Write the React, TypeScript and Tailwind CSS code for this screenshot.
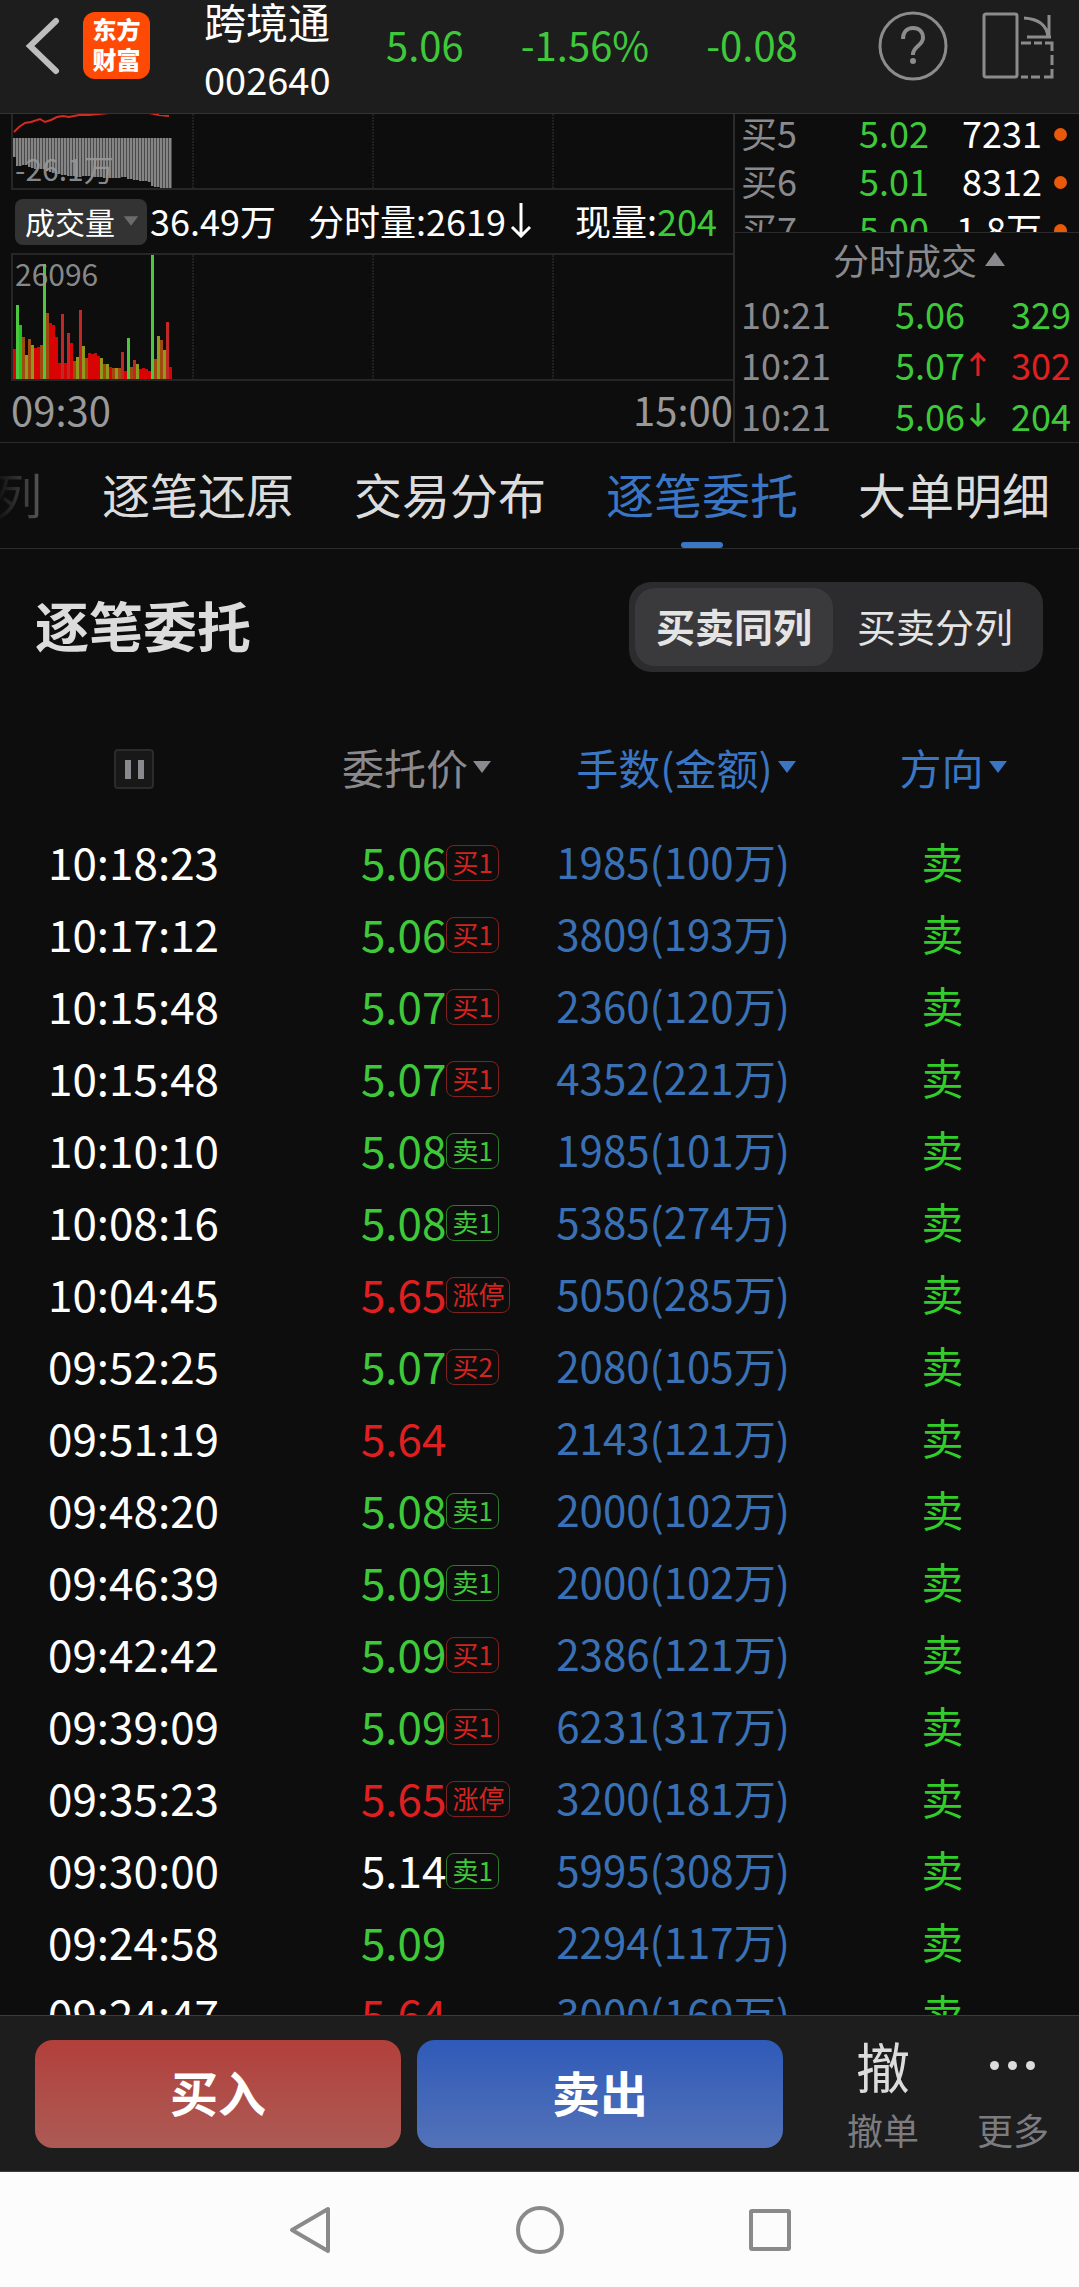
import React from 'react';
import clsx from 'clsx';

type Tone = 'up' | 'down' | 'flat';

interface Order {
  time: string;
  price: string;
  tone: Tone;
  tag?: string;
  amount: string;
}

const toneText: Record<Tone, string> = {
  up: 'text-[#e02020]',
  down: 'text-[#3fc93a]',
  flat: 'text-white',
};

const orders: Order[] = [
  { time: '10:18:23', price: '5.06', tone: 'down', tag: '买1', amount: '1985(100万)' },
  { time: '10:17:12', price: '5.06', tone: 'down', tag: '买1', amount: '3809(193万)' },
  { time: '10:15:48', price: '5.07', tone: 'down', tag: '买1', amount: '2360(120万)' },
  { time: '10:15:48', price: '5.07', tone: 'down', tag: '买1', amount: '4352(221万)' },
  { time: '10:10:10', price: '5.08', tone: 'down', tag: '卖1', amount: '1985(101万)' },
  { time: '10:08:16', price: '5.08', tone: 'down', tag: '卖1', amount: '5385(274万)' },
  { time: '10:04:45', price: '5.65', tone: 'up', tag: '涨停', amount: '5050(285万)' },
  { time: '09:52:25', price: '5.07', tone: 'down', tag: '买2', amount: '2080(105万)' },
  { time: '09:51:19', price: '5.64', tone: 'up', amount: '2143(121万)' },
  { time: '09:48:20', price: '5.08', tone: 'down', tag: '卖1', amount: '2000(102万)' },
  { time: '09:46:39', price: '5.09', tone: 'down', tag: '卖1', amount: '2000(102万)' },
  { time: '09:42:42', price: '5.09', tone: 'down', tag: '买1', amount: '2386(121万)' },
  { time: '09:39:09', price: '5.09', tone: 'down', tag: '买1', amount: '6231(317万)' },
  { time: '09:35:23', price: '5.65', tone: 'up', tag: '涨停', amount: '3200(181万)' },
  { time: '09:30:00', price: '5.14', tone: 'flat', tag: '卖1', amount: '5995(308万)' },
  { time: '09:24:58', price: '5.09', tone: 'down', amount: '2294(117万)' },
  { time: '09:24:47', price: '5.64', tone: 'up', amount: '3000(169万)' },
];

const bids = [
  { level: '买5', price: '5.02', qty: '7231' },
  { level: '买6', price: '5.01', qty: '8312' },
  { level: '买7', price: '5.00', qty: '1.8万' },
];

const trades: { time: string; price: string; arrow?: 'up' | 'down'; qty: string; tone: Tone }[] = [
  { time: '10:21', price: '5.06', qty: '329', tone: 'down' },
  { time: '10:21', price: '5.07', arrow: 'up', qty: '302', tone: 'up' },
  { time: '10:21', price: '5.06', arrow: 'down', qty: '204', tone: 'down' },
];

// one bar per minute: colour key + height
const barColors: Record<string, string> = {
  r: '#d80404',
  t: '#c02828',
  b: '#a04a10',
  g: '#1fc41f',
  l: '#4cc840',
  o: '#8f9a1c',
};
const volumes: [string, number][] = [
  ['r', 30], ['l', 74], ['g', 54], ['b', 42], ['o', 24], ['b', 40], ['o', 34], ['r', 31],
  ['r', 32], ['b', 34], ['l', 115], ['b', 66], ['r', 56], ['r', 54], ['r', 42], ['r', 16],
  ['t', 65], ['r', 16], ['t', 46], ['r', 36], ['b', 18], ['o', 22], ['t', 69], ['o', 33],
  ['b', 21], ['r', 26], ['r', 25], ['r', 26], ['r', 23], ['o', 21], ['b', 15], ['o', 15],
  ['r', 12], ['b', 11], ['o', 11], ['b', 11], ['t', 27], ['r', 8], ['l', 41], ['b', 12],
  ['t', 19], ['o', 15], ['r', 10], ['r', 11], ['r', 10], ['r', 8], ['l', 126], ['b', 20],
  ['o', 43], ['b', 39], ['o', 29], ['t', 57], ['r', 12],
];
const flows = [
  19, 28, 28, 27, 27, 29, 30, 31, 31, 31, 31, 33, 34, 35, 36, 36, 37, 37,
  38, 38, 38, 39, 39, 38, 38, 38, 39, 39, 39, 39, 40, 40, 40, 40, 40, 40,
  39, 39, 41, 41, 42, 42, 43, 43, 43, 44, 48, 49, 49, 50, 51, 52, 52,
];

const Caret: React.FC<{ className?: string; up?: boolean }> = ({ className, up }) => (
  <svg width="20" height="14" viewBox="0 0 20 14" className={className} aria-hidden="true">
    <path d={up ? 'M10 0 20 14H0Z' : 'M1 1H19L10 13Z'} fill="currentColor" />
  </svg>
);

const GridLines: React.FC = () => (
  <>
    {['25%', '50%', '75%'].map(x => (
      <line key={x} x1={x} x2={x} y1="0" y2="100%" stroke="#202020" strokeWidth="2" strokeDasharray="2 1" />
    ))}
  </>
);

const Header: React.FC = () => (
  <header className="flex h-[114px] shrink-0 items-start border-b border-[#333] bg-[#1d1d1d] pl-6 pr-6">
    <button aria-label="返回" className="mt-4">
      <svg width="36" height="60" viewBox="0 0 36 60" fill="none">
        <path d="M32 5 6 30 32 55" stroke="#bdbdbd" strokeWidth="6" strokeLinecap="round" />
      </svg>
    </button>
    <div className="ml-[23px] mt-3 flex h-[67px] w-[67px] flex-col items-center justify-center rounded-xl bg-[#ff4a05] pb-1 text-2xl font-black leading-[30px] text-white">
      <span>东方</span>
      <span>财富</span>
    </div>
    <div className="ml-[54px] flex w-32 flex-col text-white">
      <h1 className="text-[42px] leading-[42px]">跨境通</h1>
      <span className="text-[38px] leading-[74px]">002640</span>
    </div>
    <div className="ml-[54px] flex gap-[57px] text-[40px] leading-[88px] text-[#3fc93a]">
      <span>5.06</span>
      <span>-1.56%</span>
      <span>-0.08</span>
    </div>
    <div className="ml-auto mt-[10px] flex gap-8">
      <button aria-label="帮助">
        <svg width="72" height="72" viewBox="0 0 72 72" fill="none" stroke="#8c8c8c" strokeWidth="3">
          <circle cx="36" cy="36" r="33" />
          <path d="M26 29c0-7 4-11 10-11s10 4 10 10c0 7-10 9-10 16v1" strokeWidth="4" />
          <circle cx="36" cy="51" r="3" fill="#8c8c8c" stroke="none" />
        </svg>
      </button>
      <button aria-label="横屏">
        <svg width="74" height="72" viewBox="0 0 74 72" fill="none" stroke="#8c8c8c" strokeWidth="3">
          <rect x="3" y="4" width="33" height="63" rx="2" />
          <path d="M43 8c15 1 23 8 24 19M68 5v22M46 27h24" />
          <path d="M40 33h10M53 33h8M64 33h7v8M71 45v10M71 59v8h-8M59 67h-9M47 67h-7" />
        </svg>
      </button>
    </div>
  </header>
);

const MiniCharts: React.FC = () => (
  <div className="min-w-0 flex-1">
    <div className="relative ml-[11px] h-[76px] border-b-2 border-l-2 border-[#262626]">
      <svg className="block h-full w-full">
        <GridLines />
        {flows.map((h, i) => (
          <rect key={i} x={i * 3} y="24" width="2" height={h} fill="#858585" />
        ))}
        {flows.map((h, i) => (
          <rect key={i} x={i * 3 + 2} y="24" width="1" height={h} fill="#4a4a4a" />
        ))}
        <path
          d="M1 18 6 13 12 9 18 8 27 5 32 8 38 6 44 3 50 2 56 3 66 1 76 1 96 -1M136 -1 146 1 156 2"
          fill="none"
          stroke="#d42a20"
          strokeWidth="2"
        />
      </svg>
      <span className="absolute bottom-0.5 left-0.5 text-3xl leading-9 text-[#999]/90">-26.1万</span>
    </div>
    <div className="flex h-[63px] items-center whitespace-nowrap text-[36px] leading-[46px] text-white">
      <button className="ml-[15px] flex h-[46px] w-[132px] items-center justify-between rounded-lg bg-[#333] pb-0.5 pl-[10px] pr-2 text-3xl">
        成交量
        <Caret className="w-4 text-[#6b6b6b]" />
      </button>
      <span className="ml-[3px] pb-1">36.49万</span>
      <span className="ml-8 flex items-center gap-1 pb-1">
        分时量:2619
        <svg width="22" height="36" viewBox="0 0 22 36" aria-hidden="true">
          <path d="M11 1V34M2 25l9 9 9-9" fill="none" stroke="#fff" strokeWidth="3" />
        </svg>
      </span>
      <span className="ml-auto pb-1 pr-4">
        现量:<span className="text-[#3fc93a]">204</span>
      </span>
    </div>
    <div className="relative ml-[11px] h-32 border-y-2 border-l-2 border-[#262626]">
      <svg className="block h-full w-full">
        <GridLines />
        {volumes.map(([c, h], i) => (
          <rect key={i} x={i * 3} y={124 - h} width="3" height={h} fill={barColors[c]} />
        ))}
      </svg>
      <span className="absolute left-0.5 top-0 text-3xl leading-9 text-[#999]/90">26096</span>
    </div>
    <div className="flex h-[60px] items-center justify-between pb-1 pl-[11px] text-[40px] leading-none text-[#999]">
      <span>09:30</span>
      <span>15:00</span>
    </div>
  </div>
);

const Quotes: React.FC = () => (
  <aside className="w-[346px] shrink-0 border-l-2 border-[#2b2b2b] text-[36px] leading-[48px]">
    <div className="h-[119px] overflow-hidden border-b border-[#2b2b2b] pl-[6px] pr-3">
      <ul className="-mt-1.5">
        {bids.map(b => (
          <li key={b.level} className="flex h-12 items-center">
            <span className="w-[118px] text-[#8a8a8e]">{b.level}</span>
            <span className="text-[#3fc93a]">{b.price}</span>
            <span className="ml-auto text-white">{b.qty}</span>
            <span className="ml-3 mt-1 h-[13px] w-[13px] rounded-full bg-[#e8590c]" />
          </li>
        ))}
      </ul>
    </div>
    <button className="flex h-14 w-full items-center justify-center gap-2 pb-1 pl-6 text-[#8a8a8e]">
      分时成交
      <Caret up />
    </button>
    <ul className="pl-[6px] pr-2">
      {trades.map((t, i) => (
        <li key={i} className="flex h-[51px] items-center pb-1">
          <span className="w-[154px] text-[#8a8a8e]">{t.time}</span>
          <span className="text-[#3fc93a]">{t.price}</span>
          {t.arrow && (
            <svg width="18" height="24" viewBox="0 0 18 24" fill="none" strokeWidth="3" className={clsx('ml-1', toneText[t.tone])}>
              <path d={t.arrow === 'up' ? 'M9 24V2M2 9l7-7 7 7' : 'M9 0V22M2 15l7 7 7-7'} stroke="currentColor" />
            </svg>
          )}
          <span className={clsx('ml-auto', toneText[t.tone])}>{t.qty}</span>
        </li>
      ))}
    </ul>
  </aside>
);

const Tabs: React.FC = () => {
  const tabs = ['逐笔还原', '交易分布', '逐笔委托', '大单明细'];
  return (
    <nav className="flex h-[107px] shrink-0 gap-[60px] overflow-hidden whitespace-nowrap border-y border-[#2b2b2b] text-[48px]">
      <button className="-ml-[6px] w-12 bg-gradient-to-r from-[#0d0d0d] to-[#5a5a5a] bg-clip-text pb-1.5 text-transparent">列</button>
      {tabs.map(tab => {
        const active = tab === '逐笔委托';
        return (
          <button key={tab} className={clsx('relative h-full pb-1.5', active ? 'text-[#3a76c4]' : 'text-[#dcdcdc]')}>
            {tab}
            {active && (
              <span className="absolute bottom-0 left-1/2 h-[6px] w-[42px] -translate-x-1/2 rounded-full bg-[#3a76c4]" />
            )}
          </button>
        );
      })}
    </nav>
  );
};

const Tag: React.FC<{ text: string }> = ({ text }) => (
  <span
    className={clsx(
      'mt-1 inline-flex h-9 items-center rounded-lg border px-[5px] pb-0.5 text-[26px] leading-none',
      text.startsWith('卖') ? 'border-[#2f7a2c] text-[#3fc93a]' : 'border-[#7c2220] text-[#d42420]',
    )}
  >
    {text}
  </span>
);

const OrderTable: React.FC = () => (
  <table className="w-full table-fixed text-left text-[42px] leading-none">
    <colgroup>
      <col className="w-[31.5%]" />
      <col className="w-[19.5%]" />
      <col className="w-[32%]" />
      <col />
    </colgroup>
    <thead>
      <tr className="h-[116px] whitespace-nowrap">
        <th className="pl-[114px]">
          <button aria-label="暂停" className="flex h-10 w-10 items-center justify-center gap-[7px] rounded border-2 border-[#2b2b2b] bg-[#181818]">
            <span className="h-[19px] w-[6px] bg-[#8a8a8e]" />
            <span className="h-[19px] w-[6px] bg-[#8a8a8e]" />
          </button>
        </th>
        <th className="pb-1 pl-0.5 font-normal text-[#8a8a8e]">
          <button className="flex items-center gap-1">
            委托价
            <Caret />
          </button>
        </th>
        <th className="pb-1 pl-[26px] font-normal text-[#3a76c4]">
          <button className="flex items-center gap-1">
            手数(金额)
            <Caret />
          </button>
        </th>
        <th className="pb-1 pl-1 font-normal text-[#3a76c4]">
          <button className="flex items-center gap-1">
            方向
            <Caret />
          </button>
        </th>
      </tr>
    </thead>
    <tbody>
      {orders.map((o, i) => (
        <tr key={i} className="h-[72px] whitespace-nowrap">
          <td className="pb-1 pl-12 text-[44px] text-white">{o.time}</td>
          <td className="pb-1 pl-[21px] text-[44px]">
            <div className="flex items-center">
              <span className={toneText[o.tone]}>{o.price}</span>
              {o.tag && <Tag text={o.tag} />}
            </div>
          </td>
          <td className="pb-1 pl-[6px] text-[#3a70b4]">{o.amount}</td>
          <td className="pb-1 pl-[26px] text-[#2fce28]">卖</td>
        </tr>
      ))}
    </tbody>
  </table>
);

const TradeBar: React.FC = () => (
  <footer className="flex h-[157px] shrink-0 items-center border-y border-[#3a3a3a] bg-[#1d1d1d] pl-[35px] pr-[30px]">
    <div className="flex flex-1 gap-4 text-[48px] font-bold text-white">
      <button className="h-[108px] flex-1 rounded-[18px] bg-gradient-to-b from-[#b23f3b] to-[#ac5a55] pb-1.5">买入</button>
      <button className="h-[108px] flex-1 rounded-[18px] bg-gradient-to-b from-[#2f5ab8] to-[#5372b8] pb-1.5">卖出</button>
    </div>
    <button className="ml-16 flex flex-col items-center">
      <span className="text-[54px] leading-[54px] text-[#dcdcdc]">撤</span>
      <span className="mt-4 text-[36px] leading-10 text-[#7c7c80]">撤单</span>
    </button>
    <button className="ml-[58px] flex flex-col items-center">
      <span className="flex h-[54px] items-center gap-[9px]">
        <span className="h-[9px] w-[9px] rounded-full bg-[#dcdcdc]" />
        <span className="h-[9px] w-[9px] rounded-full bg-[#dcdcdc]" />
        <span className="h-[9px] w-[9px] rounded-full bg-[#dcdcdc]" />
      </span>
      <span className="mt-4 text-[36px] leading-10 text-[#7c7c80]">更多</span>
    </button>
  </footer>
);

const SystemNav: React.FC = () => (
  <nav className="flex h-[116px] shrink-0 items-center justify-center border-b border-[#d4d4d4] bg-[#fcfcfc]">
    <button aria-label="后退" className="flex w-[230px] justify-center">
      <svg width="48" height="50" viewBox="0 0 48 50" fill="none" stroke="#8a8a8a" strokeWidth="4" strokeLinejoin="round">
        <path d="M42 4V46L6 25Z" />
      </svg>
    </button>
    <button aria-label="主页" className="flex w-[230px] justify-center">
      <svg width="50" height="50" viewBox="0 0 50 50" fill="none" stroke="#8a8a8a" strokeWidth="4">
        <circle cx="25" cy="25" r="22" />
      </svg>
    </button>
    <button aria-label="最近任务" className="flex w-[230px] justify-center">
      <svg width="44" height="44" viewBox="0 0 44 44" fill="none" stroke="#8a8a8a" strokeWidth="4" strokeLinejoin="round">
        <rect x="3" y="3" width="38" height="38" rx="1" />
      </svg>
    </button>
  </nav>
);

export default function App() {
  return (
    <div className="flex h-screen flex-col bg-[#0d0d0d] font-['Noto_Sans_CJK_SC',sans-serif]">
      <Header />
      <section className="flex shrink-0">
        <MiniCharts />
        <Quotes />
      </section>
      <Tabs />
      <main className="min-h-0 flex-1 overflow-hidden">
        <div className="flex items-center justify-between pb-[39px] pl-[35px] pr-9 pt-[33px]">
          <h2 className="pb-1 text-[54px] font-bold leading-none text-[#dcdcdc]">逐笔委托</h2>
          <div className="flex h-[90px] rounded-[22px] bg-[#2c2c2e] p-[6px] text-[39px] text-[#e4e4e4]">
            <button className="rounded-[20px] bg-[#3a3a3c] px-[21px] pb-1 font-bold">买卖同列</button>
            <button className="px-6 pb-1">买卖分列</button>
          </div>
        </div>
        <OrderTable />
      </main>
      <TradeBar />
      <SystemNav />
    </div>
  );
}
